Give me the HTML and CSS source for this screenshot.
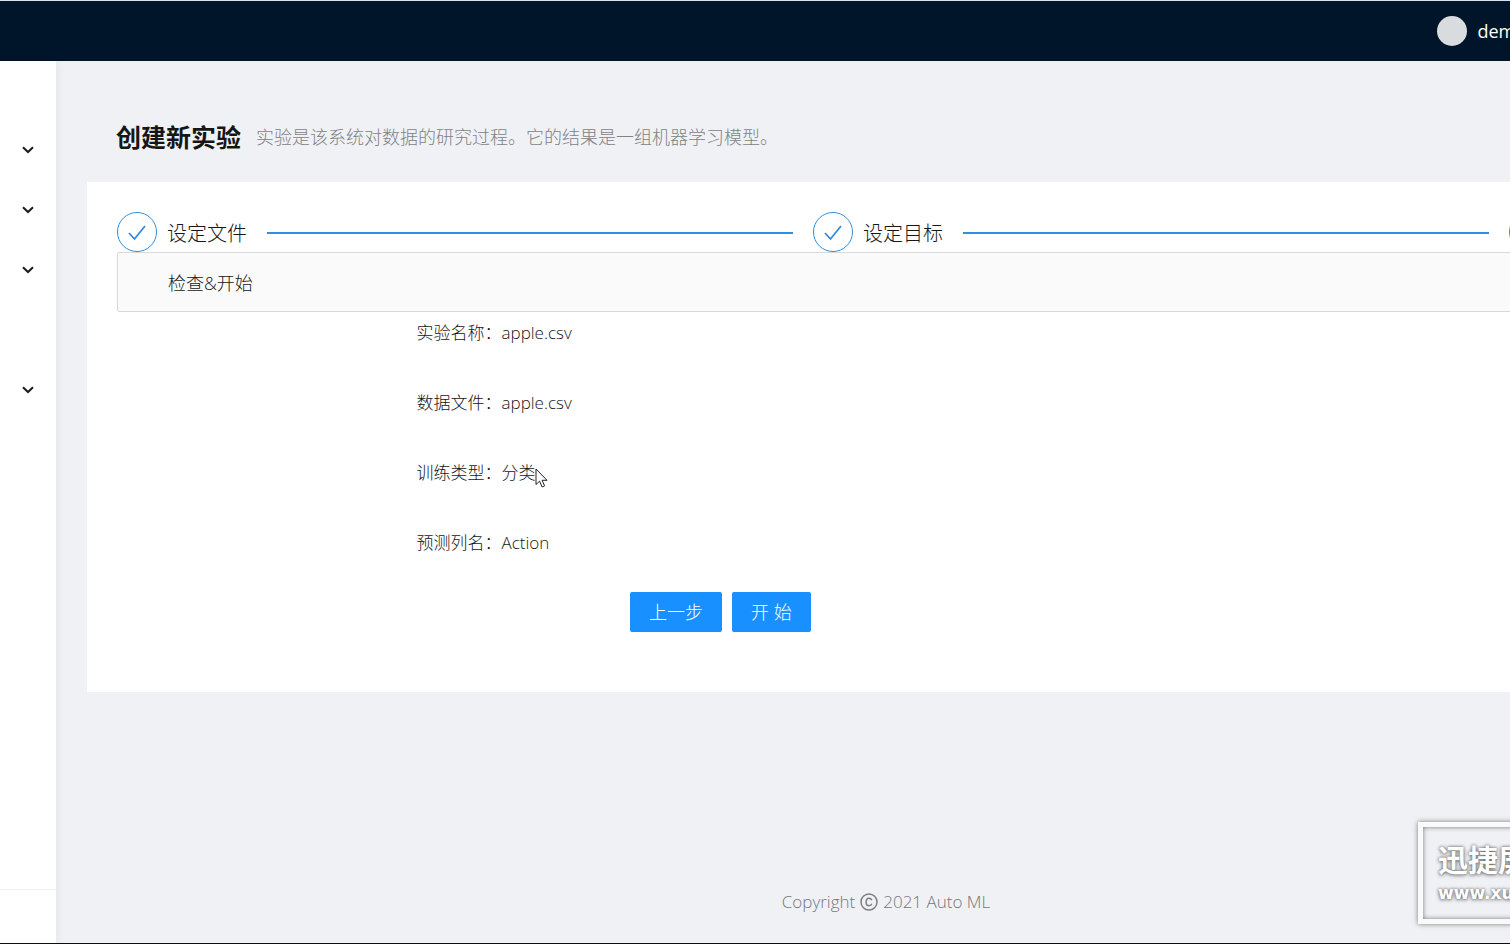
FILE: index.html
```html
<!DOCTYPE html>
<html lang="zh-CN">
<head>
<meta charset="utf-8">
<title>创建新实验</title>
<link rel="stylesheet" href="styles.css">
</head>
<body>
<div class="app">
  <header class="topbar">
    <span class="avatar"></span>
    <span class="user">demo</span>
  </header>
  <div class="body">
    <nav class="sidebar">
      <button class="toggle" aria-label="菜单一"><svg viewBox="0 0 12 8"><path d="M1 1.2 6 6l5-4.800"/></svg></button>
      <button class="toggle" aria-label="菜单二"><svg viewBox="0 0 12 8"><path d="M1 1.2 6 6l5-4.800"/></svg></button>
      <button class="toggle" aria-label="菜单三"><svg viewBox="0 0 12 8"><path d="M1 1.2 6 6l5-4.800"/></svg></button>
      <div class="leaf"></div>
      <button class="toggle" aria-label="菜单四"><svg viewBox="0 0 12 8"><path d="M1 1.2 6 6l5-4.800"/></svg></button>
      <div class="sidebar-foot"></div>
    </nav>
    <main class="content">
      <div class="heading">
        <h1>创建新实验</h1>
        <p>实验是该系统对数据的研究过程。它的结果是一组机器学习模型。</p>
      </div>
      <section class="card">
        <ol class="steps">
          <li class="step">
            <span class="step-icon"><svg viewBox="0 0 20 20"><path d="M2 11 7.500 17 18 4"/></svg></span>
            <span class="step-title">设定文件</span>
            <span class="step-line"></span>
          </li>
          <li class="step">
            <span class="step-icon"><svg viewBox="0 0 20 20"><path d="M2 11 7.500 17 18 4"/></svg></span>
            <span class="step-title">设定目标</span>
            <span class="step-line"></span>
          </li>
          <li class="step last"><span class="step-icon"></span></li>
        </ol>
        <div class="notice">检查&amp;开始</div>
        <dl class="details">
          <div class="row"><dt>实验名称：</dt><dd>apple.csv</dd></div>
          <div class="row"><dt>数据文件：</dt><dd>apple.csv</dd></div>
          <div class="row"><dt>训练类型：</dt><dd>分类</dd></div>
          <div class="row"><dt>预测列名：</dt><dd>Action</dd></div>
        </dl>
        <div class="actions">
          <button class="btn">上一步</button>
          <button class="btn">开 始</button>
        </div>
      </section>
      <footer class="footer">
        <span>Copyright</span>
        <svg viewBox="0 0 18 18"><circle cx="9" cy="9" r="8"/><path d="M11.800 7.200C11.300 5.900 10.300 5.200 9 5.200 7.200 5.200 6.100 6.700 6.100 9s1.100 3.800 2.900 3.800c1.300 0 2.300-.7 2.800-2"/></svg>
        <span>2021 Auto ML</span>
      </footer>
    </main>
  </div>
  <div class="watermark">
    <div class="mark-name">迅捷屏幕</div>
    <div class="mark-url">www.xunjie</div>
  </div>
  <svg class="cursor" viewBox="0 0 13 20"><path d="M1 1v15.500l3.600-3.300 2.500 5.800 2.500-1.100-2.500-5.600h4.900z"/></svg>
</div>
</body>
</html>
```
FILE: styles.css
```css
* { box-sizing: border-box; }
body {
  margin: 0;
  overflow: hidden;
  color: #161616;
  font-family: "Open Sans", "Noto Sans CJK SC", sans-serif;
  font-size: 17px;
  font-weight: 300;
  line-height: 30px;
}
h1, p, ol, dl, dd { margin: 0; padding: 0; }
button { font: inherit; border: 0; cursor: pointer; }
.app {
  position: relative;
  display: flex;
  flex-direction: column;
  height: 100vh;
  overflow: hidden;
  border-top: 1px solid #d8e2ea;
  border-bottom: 1px solid #0b0d12;
  background: #f0f1f5;
}
.topbar {
  display: flex;
  flex: none;
  align-items: center;
  justify-content: flex-end;
  gap: 10px;
  height: 60px;
  margin-right: -16px;
  background: #001529;
  color: #fff;
  font-size: 18px;
  font-weight: 400;
}
.avatar { width: 30px; height: 30px; border-radius: 50%; background: #d9dcdf; }
.body { display: flex; flex: 1; min-height: 0; }
.sidebar {
  display: flex;
  flex: none;
  flex-direction: column;
  width: 56px;
  padding-top: 59px;
  background: #fff;
  box-shadow: 2px 0 8px rgba(29, 35, 41, .05);
}
.toggle, .leaf { height: 60px; flex: none; }
.toggle { display: flex; align-items: center; justify-content: center; padding: 0; background: none; }
.toggle svg { width: 12px; height: 8px; fill: none; stroke: #1c1c1c; stroke-width: 2; }
.sidebar-foot { height: 54px; margin-top: auto; border-top: 1px solid #f0f0f0; }
.content {
  display: flex;
  flex: 1 0 auto;
  flex-direction: column;
  width: calc(100% + 150px);
  padding: 61px 31px 0;
}
.heading { display: flex; align-items: center; gap: 15px; height: 30px; margin: 0 0 30px 29px; }
.heading h1 { font-size: 25px; font-weight: 700; }
.heading p { color: #808285; font-size: 18px; }
.card { padding: 30px 30px 60px; background: #fff; }
.steps { display: flex; list-style: none; }
.step { display: flex; flex: 1; align-items: center; height: 40px; }
.step.last { flex: none; width: 146px; }
.step-icon {
  display: flex;
  flex: none;
  align-items: center;
  justify-content: center;
  width: 40px;
  height: 40px;
  border: 1px solid #318fdc;
  border-radius: 50%;
}
.step-icon svg { width: 20px; height: 20px; fill: none; stroke: #2c86dd; stroke-width: 1.7; }
.step-title { flex: none; margin: 0 20px 0 10px; padding-top: 3px; font-size: 20px; }
.step-line { flex: 1; height: 2px; margin: 2px 20px 0 0; background: #318fdc; }
.notice {
  height: 60px;
  padding: 15px 50px;
  border: 1px solid #d9d9d9;
  border-radius: 2px;
  background: #fafafa;
  font-size: 18px;
}
.row { display: flex; height: 40px; margin-bottom: 30px; padding-top: 2px; align-items: center; }
.row dt { width: 25%; text-align: right; }
.actions { display: flex; gap: 10px; padding-left: 513px; }
.btn { height: 40px; padding: 0 19px; border-radius: 2px; background: #1890ff; color: #fff; font-size: 18px; }
.footer {
  display: flex;
  align-items: center;
  justify-content: center;
  gap: 5px;
  margin-top: auto;
  padding-bottom: 26px;
  color: #747679;
}
.footer svg { width: 18px; height: 18px; fill: none; stroke: #7c7e81; stroke-width: 1.5; }
.watermark {
  position: absolute;
  right: -110px;
  bottom: 19px;
  width: 202px;
  height: 102px;
  padding: 16px 15px;
  overflow: hidden;
  border: 5px solid #fafafa;
  box-shadow: 0 0 5px #777, inset 0 0 5px #777;
  color: #fff;
  font-weight: 700;
  text-shadow: 0 0 3px #666, 0 1px 4px #888;
  white-space: nowrap;
}
.mark-name { font-size: 30px; line-height: 34px; }
.mark-url { font-family: "DejaVu Sans", sans-serif; font-size: 17px; line-height: 32px; }
.cursor { position: absolute; left: 535px; top: 467px; width: 13px; height: 20px; fill: #fff; stroke: #222; }
```
